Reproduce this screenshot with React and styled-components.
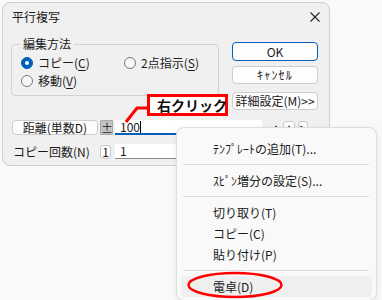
import React from 'react'
import styled, { createGlobalStyle } from 'styled-components'

const GlobalStyle = createGlobalStyle`
  html, body { margin: 0; padding: 0; }
  body {
    font-family: "Noto Sans CJK JP", "Noto Sans", sans-serif;
    background: #f9f9f9;
    text-autospace: no-autospace;
  }
  button { text-autospace: no-autospace; }
`;

const Page = styled.div`
  position: relative;
  width: 382px;
  height: 300px;
  overflow: hidden;
  background: #f9f9f9;
  padding: 2px 0 0 2px;
  box-sizing: border-box;
  font-size: 12px;
  color: #1a1a1a;
`;

const Dialog = styled.div`
  width: 328px;
  height: 164px;
  box-sizing: border-box;
  border: 1px solid #cfcfcf;
  border-radius: 8px;
  background: #f0f0f0;
  display: flex;
  flex-direction: column;
`;

const TitleBar = styled.div`
  height: 28px;
  display: flex;
  align-items: center;
  justify-content: space-between;
  padding: 0 9px 0 9px;
  font-size: 12px;
  line-height: 14px;
`;

const Body = styled.div`
  padding: 0 11px 0 8px;
  display: flex;
  flex-direction: column;
`;

const Top = styled.div`
  margin-top: 6px;
  display: flex;
  justify-content: space-between;
  align-items: flex-start;
`;

const GroupBox = styled.fieldset`
  margin: 0;
  padding: 0;
  width: 208px;
  box-sizing: border-box;
  border: 1px solid #d2d2d2;
  border-radius: 4px;
  min-inline-size: 0;

  legend {
    margin-left: 8px;
    padding: 0 3px;
    font-size: 12px;
    line-height: 14px;
  }
`;

const RadioGrid = styled.div`
  display: grid;
  grid-template-columns: 103px auto;
  padding: 3px 0 5px 9px;
`;

const RadioItem = styled.label`
  display: flex;
  align-items: center;
  height: 18px;
  line-height: 14px;
  white-space: pre;

  u { text-underline-offset: 2px; }
`;

const RadioDot = styled.span`
  width: 12px;
  height: 12px;
  margin-right: 5px;
  box-sizing: border-box;
  border-radius: 50%;
  border: 1px solid ${p => (p.$on ? '#005fb8' : '#7a7a7a')};
  background: ${p => (p.$on ? '#005fb8' : '#f7f7f7')};
  display: flex;
  align-items: center;
  justify-content: center;

  &::after {
    content: '';
    width: 4px;
    height: 4px;
    border-radius: 50%;
    background: #fff;
    display: ${p => (p.$on ? 'block' : 'none')};
  }
`;

const ButtonCol = styled.div`
  margin-top: 5px;
  width: 86px;
  display: flex;
  flex-direction: column;
`;

const PushButton = styled.button`
  height: ${p => (p.$default ? '19px' : '18px')};
  margin-top: ${p => p.$gap || 0}px;
  padding: 0;
  box-sizing: border-box;
  border: 1px solid ${p => (p.$default ? '#005fb8' : '#cdcdcd')};
  border-radius: 4px;
  background: #fdfdfd;
  font-family: inherit;
  font-size: 12px;
  line-height: 14px;
  letter-spacing: ${p => p.$spread || 0}px;
  color: #1a1a1a;
  white-space: nowrap;
`;

const FieldRow = styled.div`
  display: grid;
  grid-template-columns: 87px 13px 147px auto;
  column-gap: 2px;
  align-items: center;
  height: 15px;
  margin-top: ${p => p.$gap}px;
`;

const LabelButton = styled.button`
  margin-left: 1px;
  height: 15px;
  padding: 0;
  box-sizing: border-box;
  border: 1px solid #cdcdcd;
  border-radius: 4px;
  background: #fdfdfd;
  font-family: inherit;
  font-size: 12px;
  line-height: 13px;
  color: #1a1a1a;
`;

const FieldLabel = styled.span`
  padding-left: 2px;
  line-height: 14px;
  white-space: nowrap;
`;

const SmallButton = styled.button`
  width: ${p => p.$w}px;
  height: ${p => p.$h}px;
  padding: 0;
  box-sizing: border-box;
  border: 1px solid ${p => (p.$gray ? '#a8a8a8' : '#c8c8c8')};
  border-radius: ${p => (p.$gray ? 1 : 3)}px;
  background: ${p => (p.$gray ? '#c2c2c2' : '#fdfdfd')};
  font-family: inherit;
  font-size: 12px;
  line-height: 12px;
  color: #1a1a1a;
`;

const TextBox = styled.div`
  height: 15px;
  box-sizing: border-box;
  background: #fff;
  padding-left: 5px;
  border-bottom: ${p => (p.$focus ? '2px solid #005fb8' : '1px solid #8a8a8a')};
  display: flex;
  align-items: center;
  line-height: 12px;
`;

const Caret = styled.span`
  width: 1px;
  height: 12px;
  background: #000;
`;

const SpinGroup = styled.div`
  display: flex;
  align-items: center;
  gap: 3px;
  padding-left: 8px;
  font-size: 7px;
  line-height: 8px;
`;

const SpinBox = styled.span`
  width: ${p => p.$w}px;
  height: 13px;
  box-sizing: border-box;
  border: 1px solid ${p => (p.$plain ? 'transparent' : '#c8c8c8')};
  border-radius: 3px;
  background: ${p => (p.$plain ? 'transparent' : '#fdfdfd')};
  display: flex;
  justify-content: center;
  padding-top: 2px;
`;

const Callout = styled.div`
  position: absolute;
  left: 147px;
  top: 94px;
  width: 81px;
  height: 22px;
  box-sizing: border-box;
  border: 3px solid #f00;
  background: #fff;
  font-weight: 700;
  font-size: 14px;
  line-height: 16px;
  padding-left: 7px;
  color: #111;
  white-space: nowrap;
`;

const Overlay = styled.svg`
  position: absolute;
  left: 0;
  top: 0;
  pointer-events: none;
`;

const Menu = styled.div`
  position: absolute;
  left: 176px;
  top: 127px;
  width: 201px;
  height: 174px;
  box-sizing: border-box;
  background: #f9f9f9;
  border: 1px solid #dedede;
  border-radius: 8px;
  box-shadow: 0 2px 6px rgba(0, 0, 0, 0.08);
  padding-top: 10px;
`;

const MenuItem = styled.div`
  height: 21px;
  margin: 0 4px;
  padding-left: 32px;
  border-radius: 4px;
  display: flex;
  align-items: center;
  font-size: 12px;
  line-height: 14px;
  background: ${p => (p.$hot ? '#efefef' : 'transparent')};
  white-space: nowrap;
`;

const MenuSep = styled.div`
  height: 1px;
  margin: 5px 7px 5px 6px;
  background: #dcdcdc;
`;

const CloseIcon = () => (
  <svg width="10" height="10" viewBox="0 0 10 10">
    <path d="M0.5 0.5 L9.5 9.5 M9.5 0.5 L0.5 9.5" stroke="#222" strokeWidth="1.1" fill="none" />
  </svg>
);

const App = () => {
  return (
    <Page>
      <GlobalStyle />
      <Dialog>
        <TitleBar>
          <span>平行複写</span>
          <CloseIcon />
        </TitleBar>
        <Body>
          <Top>
            <GroupBox>
              <legend>編集方法</legend>
              <RadioGrid>
                <RadioItem><RadioDot $on />コピー(<u>C</u>)</RadioItem>
                <RadioItem><RadioDot />2点指示(<u>S</u>)</RadioItem>
                <RadioItem><RadioDot />移動(<u>V</u>)</RadioItem>
              </RadioGrid>
            </GroupBox>
            <ButtonCol>
              <PushButton $default>OK</PushButton>
              <PushButton $gap={5} $spread={1.2}>ｷｬﾝｾﾙ</PushButton>
              <PushButton $gap={8}>詳細設定(M)&gt;&gt;</PushButton>
            </ButtonCol>
          </Top>
          <FieldRow $gap={10}>
            <LabelButton>距離(単数D)</LabelButton>
            <SmallButton $w={13} $h={15} $gray>±</SmallButton>
            <TextBox $focus>100<Caret /></TextBox>
            <SpinGroup>
              <SpinBox $w={8} $plain>▲</SpinBox>
              <SpinBox $w={12}>▲</SpinBox>
              <SpinBox $w={10}>▶</SpinBox>
            </SpinGroup>
          </FieldRow>
          <FieldRow $gap={9}>
            <FieldLabel>コピー回数(N)</FieldLabel>
            <SmallButton $w={11} $h={14}>1</SmallButton>
            <TextBox>1</TextBox>
          </FieldRow>
        </Body>
      </Dialog>

      <Overlay width="382" height="300">
        <polyline points="126,122 137,108 148,108" stroke="#f00" strokeWidth="3" fill="none" />
      </Overlay>
      <Callout>右クリック</Callout>

      <Menu>
        <MenuItem>ﾃﾝﾌﾟﾚｰﾄの追加(T)...</MenuItem>
        <MenuSep />
        <MenuItem>ｽﾋﾟﾝ増分の設定(S)...</MenuItem>
        <MenuSep />
        <MenuItem>切り取り(T)</MenuItem>
        <MenuItem>コピー(C)</MenuItem>
        <MenuItem>貼り付け(P)</MenuItem>
        <MenuSep />
        <MenuItem $hot>電卓(D)</MenuItem>
      </Menu>

      <Overlay width="382" height="300">
        <ellipse cx="235" cy="285" rx="46.5" ry="12" stroke="#f00" strokeWidth="2.5" fill="none" />
      </Overlay>
    </Page>
  )
}

export default App
